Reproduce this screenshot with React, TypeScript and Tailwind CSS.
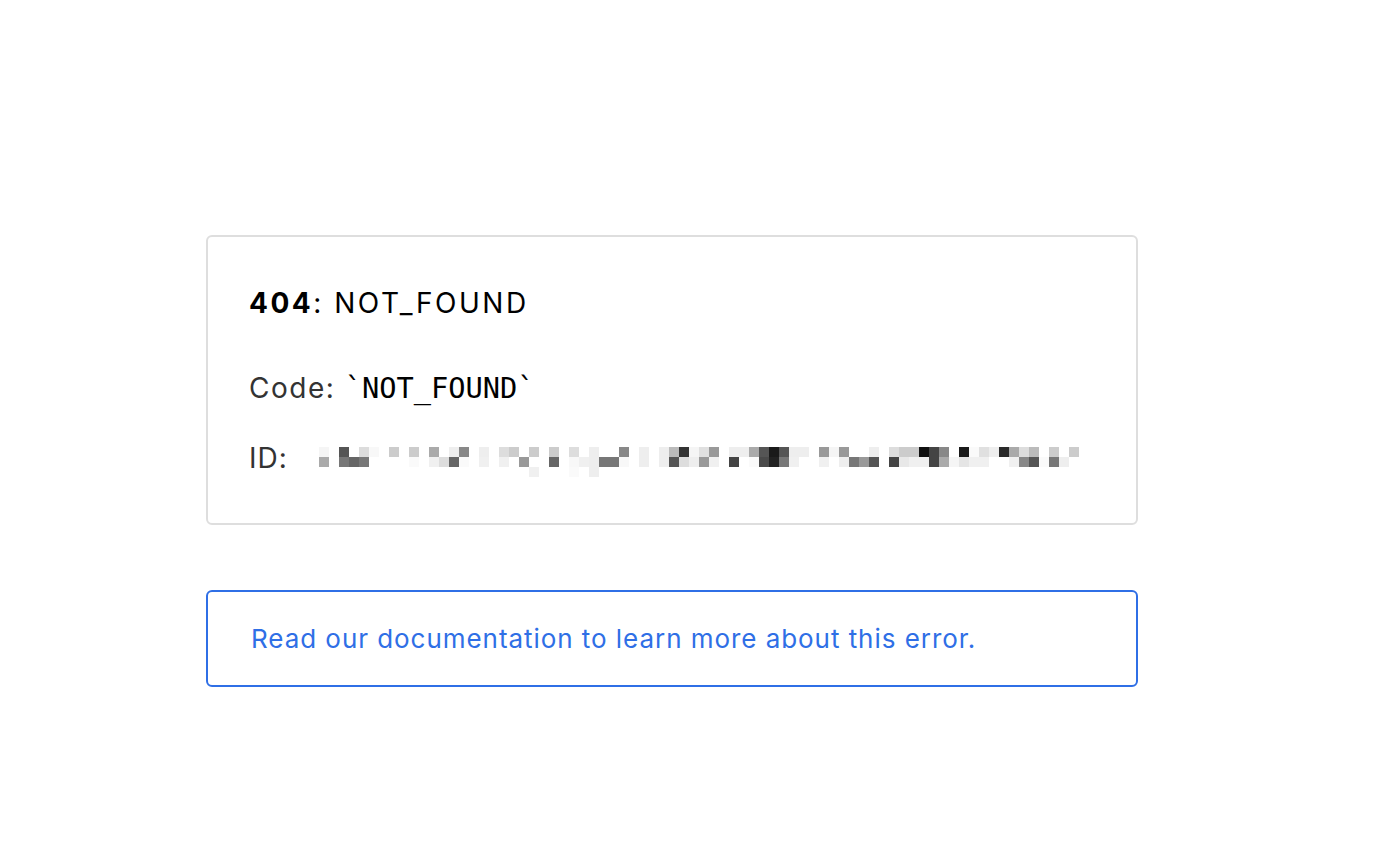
const SANS = "font-['Inter','Noto_Sans',sans-serif]";

// pixelated ID block, one gray value per 10px cell ("ff" = blank)
const ROW1 =
  'f5 ff 55 ff dc f8 ff cc ff cc ff aa ff ee 88 ff ee ff dd cc ff cc ff cc ff dd ff ee ff ff 88 ff ee ff ee bb 33 f5 e0 99 ff ee ee aa 55 1a 55 ee ee ff 99 f5 99 ff ff ee ff dd cc cc 11 44 88 ff 1a fa e0 ee 2a aa dd bb ff cc ff cc';
const ROW2 =
  'aa ff 77 66 77 ff ff ff ff fa ff f0 dd 66 fa ff f0 ff f0 ff 99 ff ff 66 ff f8 f0 ee 77 77 f8 ff ee ff ee 55 dd ee 99 f0 ff 44 ff fa 4a 22 77 f0 ff ff f0 ff ee 77 99 55 ff 44 e8 f0 f0 44 aa f5 e5 f0 f0 ff ff f0 88 55 fa 77 ee ff';
const ROW3: Record<number, string> = { 21: 'f0', 25: 'fa', 27: 'ee' };

function RedactedId() {
  const r1 = ROW1.split(' ');
  const r2 = ROW2.split(' ');
  const cells: { x: number; y: number; c: string }[] = [];
  r1.forEach((c, i) => c !== 'ff' && cells.push({ x: i, y: 0, c }));
  r2.forEach((c, i) => c !== 'ff' && cells.push({ x: i, y: 1, c }));
  Object.entries(ROW3).forEach(([i, c]) => cells.push({ x: Number(i), y: 2, c }));
  return (
    <svg width={760} height={30} viewBox="0 0 760 30" className="block" shapeRendering="crispEdges">
      {cells.map((p, i) => (
        <rect key={i} x={p.x * 10} y={p.y * 10} width={10} height={10} fill={`#${p.c}${p.c}${p.c}`} />
      ))}
    </svg>
  );
}

export default function App() {
  return (
    <div className={`min-h-[852px] w-full bg-white ${SANS}`}>
      <div className="pl-[206px] pt-[235px]">
        {/* error card */}
        <div className="w-[932px] rounded-md border-2 border-[#dedede] px-[41px] pt-[46px] pb-[45px]">
          <h1 className="text-[28px] leading-[40px] font-normal tracking-[2.5px] text-black">
            <span className="font-bold">404</span>: NOT_FOUND
          </h1>
          <p className="mt-[45px] text-[28px] leading-[40px] text-[#333]">
            <span className="tracking-[1.5px]">Code: </span>
            <code className="font-['DejaVu_Sans_Mono',monospace] text-[28.7px] text-black">`NOT_FOUND`</code>
          </p>
          <div className="mt-[30px] flex h-[40px] items-start text-[28px] leading-[40px] text-[#333]">
            <span className="tracking-[1px]">ID:</span>
            <div className="ml-[31px] pt-[9px]">
              <RedactedId />
            </div>
          </div>
        </div>

        {/* docs link */}
        <a
          href="#"
          className="mt-[65px] block w-[932px] rounded-md border-2 border-[#2f6fe6] pr-[41px] pl-[43px] pt-[27px] pb-[26px] text-[26px] leading-[40px] tracking-[0.95px] text-[#2f6fe6]"
        >
          Read our documentation to learn more about this error.
        </a>
      </div>
    </div>
  );
}
